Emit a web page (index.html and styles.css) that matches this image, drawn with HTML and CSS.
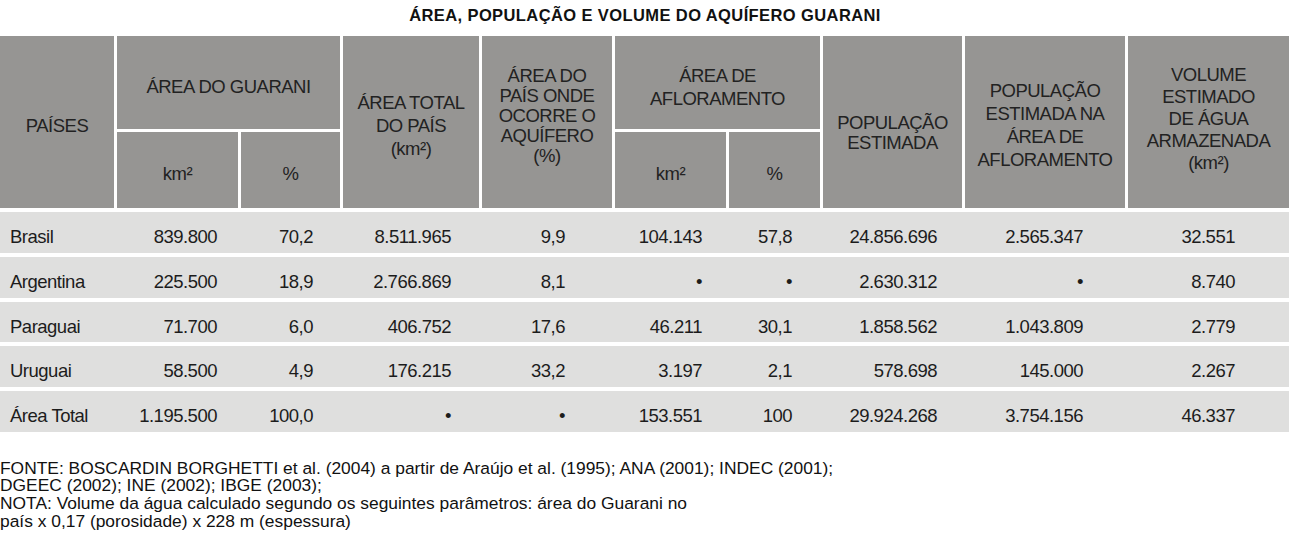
FILE: index.html
```html
<!DOCTYPE html>
<html lang="pt-BR">
<head>
<meta charset="utf-8">
<title>Área, população e volume do Aquífero Guarani</title>
<link rel="stylesheet" href="styles.css">
</head>
<body>
<div class="page">
  <h1 class="title">ÁREA, POPULAÇÃO E VOLUME DO AQUÍFERO GUARANI</h1>
  <div class="table">
    <div class="head">
      <div class="hc tall">PAÍSES</div>
      <div class="hc wide">ÁREA DO GUARANI</div>
      <div class="hc tall">ÁREA TOTAL<br>DO PAÍS<br>(km²)</div>
      <div class="hc tall tight up">ÁREA DO<br>PAÍS ONDE<br>OCORRE O<br>AQUÍFERO<br>(%)</div>
      <div class="hc wide">ÁREA DE<br>AFLORAMENTO</div>
      <div class="hc tall tight low">POPULAÇÃO<br>ESTIMADA</div>
      <div class="hc tall">POPULAÇÃO<br>ESTIMADA NA<br>ÁREA DE<br>AFLORAMENTO</div>
      <div class="hc tall vol">VOLUME<br>ESTIMADO<br>DE ÁGUA<br>ARMAZENADA<br>(km²)</div>
      <div class="hc sub">km²</div>
      <div class="hc sub">%</div>
      <div class="hc sub">km²</div>
      <div class="hc sub">%</div>
    </div>
    <div class="row">
      <div>Brasil</div><div>839.800</div><div>70,2</div><div>8.511.965</div><div>9,9</div><div>104.143</div><div>57,8</div><div>24.856.696</div><div>2.565.347</div><div>32.551</div>
    </div>
    <div class="row">
      <div>Argentina</div><div>225.500</div><div>18,9</div><div>2.766.869</div><div>8,1</div><div>•</div><div>•</div><div>2.630.312</div><div>•</div><div>8.740</div>
    </div>
    <div class="row">
      <div>Paraguai</div><div>71.700</div><div>6,0</div><div>406.752</div><div>17,6</div><div>46.211</div><div>30,1</div><div>1.858.562</div><div>1.043.809</div><div>2.779</div>
    </div>
    <div class="row">
      <div>Uruguai</div><div>58.500</div><div>4,9</div><div>176.215</div><div>33,2</div><div>3.197</div><div>2,1</div><div>578.698</div><div>145.000</div><div>2.267</div>
    </div>
    <div class="row">
      <div>Área Total</div><div>1.195.500</div><div>100,0</div><div>•</div><div>•</div><div>153.551</div><div>100</div><div>29.924.268</div><div>3.754.156</div><div>46.337</div>
    </div>
  </div>
  <p class="notes">FONTE: BOSCARDIN BORGHETTI et al. (2004) a partir de Araújo et al. (1995); ANA (2001); INDEC (2001);<br>DGEEC (2002); INE (2002); IBGE (2003);<br>NOTA: Volume da água calculado segundo os seguintes parâmetros: área do Guarani no<br>país x 0,17 (porosidade) x 228 m (espessura)</p>
</div>
</body>
</html>
```
FILE: styles.css
```css
* { box-sizing: border-box; }

html, body {
  margin: 0;
  padding: 0;
  background: #ffffff;
}

.page {
  width: 1290px;
  font-family: "Liberation Sans", Arial, sans-serif;
  color: #1c1c1c;
}

.title {
  margin: 5px 0 11px;
  height: 20px;
  font-size: 16.5px;
  line-height: 20px;
  font-weight: bold;
  letter-spacing: 0.4px;
  text-align: center;
  color: #111111;
}

.table {
  width: 1289px;
}

.head,
.row {
  display: grid;
  grid-template-columns: 114px 121px 99px 136px 130px 111px 91px 139px 160px 161px;
  column-gap: 3px;
}

.head {
  grid-template-rows: 93px 76px;
  row-gap: 3px;
}

.hc {
  background: #969593;
  display: flex;
  align-items: center;
  justify-content: center;
  text-align: center;
  font-size: 18.5px;
  line-height: 23px;
  letter-spacing: -0.5px;
  padding-top: 6px;
  color: #222222;
}

.hc.tall { grid-row: span 2; }
.hc.wide { grid-column: span 2; padding-top: 8px; }
.hc.tight { line-height: 20px; }
.hc.up { padding-top: 0; padding-bottom: 12px; }
.hc.low { padding-top: 22px; }
.hc.vol { line-height: 22px; padding-top: 0; padding-bottom: 6px; }

.row {
  background: #dfdfde;
  height: 40.75px;
  margin-top: 4px;
  font-size: 18.5px;
  line-height: 20px;
  letter-spacing: -0.5px;
}

.row > div {
  padding-top: 15px;
  text-align: right;
  white-space: nowrap;
}

.row > div:nth-child(1) { text-align: left; padding-left: 10px; }
.row > div:nth-child(2) { padding-right: 21px; }
.row > div:nth-child(3) { padding-right: 27px; }
.row > div:nth-child(4) { padding-right: 28px; }
.row > div:nth-child(5) { padding-right: 47px; }
.row > div:nth-child(6) { padding-right: 24px; }
.row > div:nth-child(7) { padding-right: 28px; }
.row > div:nth-child(8) { padding-right: 25px; }
.row > div:nth-child(9) { padding-right: 42px; }
.row > div:nth-child(10) { padding-right: 54px; }

.notes {
  margin: 28px 0 0;
  font-size: 17.4px;
  line-height: 17.7px;
  color: #111111;
  white-space: nowrap;
}
```
